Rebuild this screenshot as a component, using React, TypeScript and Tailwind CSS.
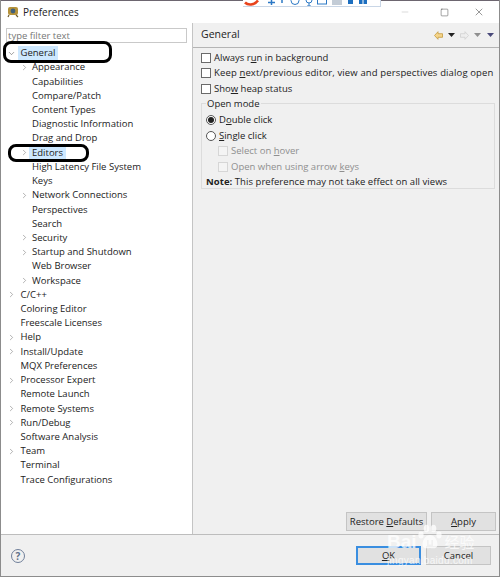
import { ChevronRight, ChevronDown, Minus, Square, X } from 'lucide-react'

// Preferences dialog, left tree + right page
type Row = { label: string; depth: number; arrow?: 'open' | 'closed'; selected?: boolean }

const rows: Row[] = [
  { label: 'General', depth: 0, arrow: 'open', selected: true },
  { label: 'Appearance', depth: 1, arrow: 'closed' },
  { label: 'Capabilities', depth: 1 },
  { label: 'Compare/Patch', depth: 1 },
  { label: 'Content Types', depth: 1 },
  { label: 'Diagnostic Information', depth: 1 },
  { label: 'Drag and Drop', depth: 1 },
  { label: 'Editors', depth: 1, arrow: 'closed', selected: true },
  { label: 'High Latency File System', depth: 1 },
  { label: 'Keys', depth: 1 },
  { label: 'Network Connections', depth: 1, arrow: 'closed' },
  { label: 'Perspectives', depth: 1 },
  { label: 'Search', depth: 1 },
  { label: 'Security', depth: 1, arrow: 'closed' },
  { label: 'Startup and Shutdown', depth: 1, arrow: 'closed' },
  { label: 'Web Browser', depth: 1 },
  { label: 'Workspace', depth: 1, arrow: 'closed' },
  { label: 'C/C++', depth: 0, arrow: 'closed' },
  { label: 'Coloring Editor', depth: 0 },
  { label: 'Freescale Licenses', depth: 0 },
  { label: 'Help', depth: 0, arrow: 'closed' },
  { label: 'Install/Update', depth: 0, arrow: 'closed' },
  { label: 'MQX Preferences', depth: 0 },
  { label: 'Processor Expert', depth: 0, arrow: 'closed' },
  { label: 'Remote Launch', depth: 0 },
  { label: 'Remote Systems', depth: 0, arrow: 'closed' },
  { label: 'Run/Debug', depth: 0, arrow: 'closed' },
  { label: 'Software Analysis', depth: 0 },
  { label: 'Team', depth: 0, arrow: 'closed' },
  { label: 'Terminal', depth: 0 },
  { label: 'Trace Configurations', depth: 0 },
]

function TreeRow({ row }: { row: Row }) {
  return (
    <div className={`flex h-[14.23px] items-center ${row.depth === 1 ? 'pl-[19px]' : 'pl-[6px]'}`}>
      <span className={`flex shrink-0 items-center text-[#7a7a7a] ${row.depth === 1 ? 'w-[11px]' : 'w-[12.5px]'}`}>
        {row.arrow === 'open' && <ChevronDown size={9} strokeWidth={1.5} className="text-[#555]" />}
        {row.arrow === 'closed' && <ChevronRight size={9} strokeWidth={1.5} />}
      </span>
      <span className={`leading-[14px] ${row.selected ? '-ml-[2px] bg-[#cde8ff] px-[3px]' : 'px-[1px]'}`}>{row.label}</span>
    </div>
  )
}

function Check({ label, disabled, wide }: { label: React.ReactNode; disabled?: boolean; wide?: boolean }) {
  return (
    <div className={`flex h-[15.5px] items-center gap-[3px] ${disabled ? 'text-[#8f8f8f]' : ''}`}>
      <span className={`h-[10px] w-[10px] shrink-0 border ${disabled ? 'border-[#d6d6d6] bg-[#f4f4f4]' : 'border-[#6a6a6a] bg-white'}`} />
      <span className={`whitespace-nowrap ${wide ? 'tracking-[0.13px]' : ''}`}>{label}</span>
    </div>
  )
}

function Radio({ label, on }: { label: React.ReactNode; on?: boolean }) {
  return (
    <div className="flex h-[15.5px] items-center gap-[3px]">
      <span className="flex h-[10px] w-[10px] shrink-0 items-center justify-center rounded-full border border-[#555] bg-white">
        {on && <span className="h-[6px] w-[6px] rounded-full bg-[#222]" />}
      </span>
      <span className="whitespace-nowrap">{label}</span>
    </div>
  )
}

function DropArrow({ color }: { color: string }) {
  return (
    <svg width="7" height="4" viewBox="0 0 7 4" aria-hidden>
      <path d="M0 0h7L3.5 4z" fill={color} />
    </svg>
  )
}

function NavArrow({ fill, stroke, flip }: { fill: string; stroke: string; flip?: boolean }) {
  return (
    <svg width="9" height="9" viewBox="0 0 9 9" className={flip ? '-scale-x-100' : ''} aria-hidden>
      <path d="M.5 4.500 4 .7v2h4.500v3.600H4v2z" fill={fill} stroke={stroke} strokeWidth="0.8" />
    </svg>
  )
}

function HelpIcon() {
  return (
    <span className="flex h-[14px] w-[14px] items-center justify-center rounded-full border border-[#6f7f99] text-[10px] font-bold leading-none text-[#5f6f8a]">
      ?
    </span>
  )
}

function Btn({ children, className }: { children: React.ReactNode; className: string }) {
  return (
    <button type="button" className={`h-[19px] border bg-[#e1e1e1] text-center leading-none ${className}`}>
      {children}
    </button>
  )
}

// Hand-drawn marker rings from the screenshot annotation
function Ring({ className }: { className: string }) {
  return <div className={`pointer-events-none absolute rounded-[8px] border-[3px] border-black ${className}`} />
}

// Tray icons of the window behind, cut off by the dialog's top edge
function BackgroundIcons() {
  return (
    <svg width="138" height="7" viewBox="0 0 138 7" aria-hidden>
      <path d="M2 2.500c3 3 9 3 13-2" fill="none" stroke="#e8431c" strokeWidth="2.600" />
      <path d="M25 2.500h7M28.500 0v5" stroke="#2b78c5" strokeWidth="1.500" />
      <path d="M39 0v3" stroke="#2b78c5" strokeWidth="1.500" />
      <circle cx="52" cy="0.500" r="4" fill="none" stroke="#2b78c5" />
      <path d="M63 0a3 3 0 0 0 6 0M66 3v3M64 6h4" fill="none" stroke="#2b78c5" />
      <rect x="74.500" y="-1" width="9" height="5" fill="none" stroke="#2b78c5" />
      <rect x="89" y="0" width="10" height="5" fill="#c3ccd6" />
      <rect x="105" y="0" width="5" height="4" fill="#1d6fc0" />
      <rect x="116" y="0" width="3.500" height="4" fill="#1d6fc0" />
      <rect x="120.500" y="0" width="3.500" height="4" fill="#1d6fc0" />
    </svg>
  )
}

function PawMark() {
  return (
    <svg width="24" height="30" viewBox="0 0 24 30" aria-hidden>
      <g fill="#ffffff" fillOpacity="0.75">
        <ellipse cx="3" cy="11" rx="2.600" ry="3.400" />
        <ellipse cx="8.500" cy="4.500" rx="2.800" ry="3.800" />
        <ellipse cx="15.500" cy="4.500" rx="2.800" ry="3.800" />
        <ellipse cx="21" cy="11" rx="2.600" ry="3.400" />
        <path d="M12 11c-4 0-7.500 5-7.500 9.500C4.500 24 7.500 25 12 24c4.500 1 7.500 0 7.500-3.500C19.500 16 16 11 12 11zM9 16v6h6v-6h-1.600v4.500h-2.800V16z" fillRule="evenodd" />
      </g>
    </svg>
  )
}

export default function App() {
  return (
    <div className="relative flex h-[577px] w-[500px] flex-col overflow-hidden border-x border-b border-[#8c8c8c] bg-white font-['Open_Sans','Liberation_Sans',sans-serif] text-[9.5px] text-[#222]">
      {/* Strip of the other window visible above the dialog */}
      <div className="relative h-[1px] shrink-0 bg-[#6d6670]">
        <div className="absolute left-[242px] top-0 z-10 h-[7px] w-[138px] overflow-hidden border-b border-r border-[#c9d6e6] bg-white">
          <BackgroundIcons />
        </div>
      </div>

      {/* Title bar */}
      <div className="flex h-[22px] shrink-0 items-center bg-white pl-[6px] text-[10px]">
        <svg width="12" height="12" viewBox="0 0 12 12" aria-hidden>
          <rect x="1" y="1" width="10" height="8" rx="2" fill="#b5923a" />
          <circle cx="6" cy="5" r="2.400" fill="#3f5f7a" />
          <path d="M2 9l-1 2M9 9l2 2" stroke="#6d5a2a" strokeWidth="1.200" />
        </svg>
        <span className="ml-[4px]">Preferences</span>
        <div className="ml-auto flex items-center text-[#333]">
          <Minus size={10} strokeWidth={1} className="mr-[30px] text-[#a8a8a8]" />
          <Square size={9} strokeWidth={1.200} className="mr-[24px]" />
          <X size={12} strokeWidth={1} className="mr-[14px]" />
        </div>
      </div>

      {/* Main */}
      <div className="flex min-h-0 flex-1">
        <div className="flex w-[192px] shrink-0 flex-col border-r border-[#c4c4c4] pl-[5px] pt-[5px]">
          <div className="h-[15px] w-[181px] border border-[#c9c9c9] pl-[1px] text-[9.5px] leading-[13px] text-[#777]">
            type filter text
          </div>
          <div className="-ml-[5px] mt-[3px] flex flex-col">
            {rows.map((row) => (
              <TreeRow key={row.label} row={row} />
            ))}
          </div>
        </div>

        <div className="flex min-w-0 flex-1 flex-col bg-[#f0f0f0]">
          <div className="flex h-[25px] shrink-0 items-center border-b border-[#b4b4b4] pl-[8px] pr-[2px]">
            <span className="text-[10.5px]">General</span>
            <div className="ml-auto flex items-center">
              <span className="flex w-[13px] justify-center"><NavArrow fill="#f5d48a" stroke="#c49a3c" /></span>
              <span className="flex w-[13px] justify-center"><DropArrow color="#222" /></span>
              <span className="flex w-[13px] justify-center"><NavArrow fill="#eeeeee" stroke="#cfcfcf" flip /></span>
              <span className="flex w-[13px] justify-center"><DropArrow color="#8f8f8f" /></span>
              <span className="flex w-[13px] justify-center"><DropArrow color="#4a4a7a" /></span>
            </div>
          </div>

          <div className="flex flex-col pl-[8px] pr-[4px] pt-[2px]">
            <Check label={<>Always r<u>u</u>n in background</>} />
            <Check wide label={<>Keep <u>n</u>ext/previous editor, view and perspectives dialog open</>} />
            <Check label={<>Sho<u>w</u> heap status</>} />

            <fieldset className="mt-[2px] h-[90px] border border-[#dcdcdc] pl-[4px]">
              <legend className="px-[1px] leading-[10px]">Open mode</legend>
              <div className="mt-[4px]">
                <Radio on label={<>D<u>o</u>uble click</>} />
                <Radio label={<><u>S</u>ingle click</>} />
                <div className="pl-[12px]">
                  <Check disabled label={<>Select on <u>h</u>over</>} />
                  <Check disabled label={<>Open when using arrow <u>k</u>eys</>} />
                </div>
                <div className="flex h-[15.5px] items-center whitespace-nowrap tracking-[0.05px]">
                  <b>Note:</b>&nbsp;This preference may not take effect on all views
                </div>
              </div>
            </fieldset>
          </div>

          <div className="mt-auto flex justify-end gap-[4px] pb-[3px] pr-[3px]">
            <Btn className="w-[81px] border-[#c4c4c4]">Restore <u>D</u>efaults</Btn>
            <Btn className="w-[65px] border-[#c4c4c4]"><u>A</u>pply</Btn>
          </div>
        </div>
      </div>

      {/* Footer */}
      <div className="flex h-[42px] shrink-0 items-center border-t border-[#bdbdbd] bg-[#f0f0f0] pl-[10px] pr-[8px]">
        <HelpIcon />
        <div className="ml-auto flex gap-[5px]">
          <Btn className="w-[65px] border-2 border-[#3a8ee0]"><u>O</u>K</Btn>
          <Btn className="w-[65px] border-[#c4c4c4]">Cancel</Btn>
        </div>
      </div>

      <Ring className="left-[2px] top-[41px] h-[22px] w-[109px]" />
      <Ring className="left-[7px] top-[144px] h-[18px] w-[81px]" />

      {/* Image host watermark */}
      <div className="pointer-events-none absolute left-[386px] top-[524px] flex flex-col font-['Liberation_Sans',sans-serif] text-white/75">
        <div className="flex items-end gap-[1px]">
          <span className="text-[19px] font-bold leading-[24px]">Bai</span>
          <PawMark />
          <span className="ml-[2px] font-['Noto_Sans_CJK_SC',sans-serif] text-[15px] leading-[24px]">经验</span>
        </div>
        <div className="mt-[2px] text-[10px] leading-[10px] tracking-[0.3px]">jingyan.baidu.com</div>
      </div>
    </div>
  )
}
